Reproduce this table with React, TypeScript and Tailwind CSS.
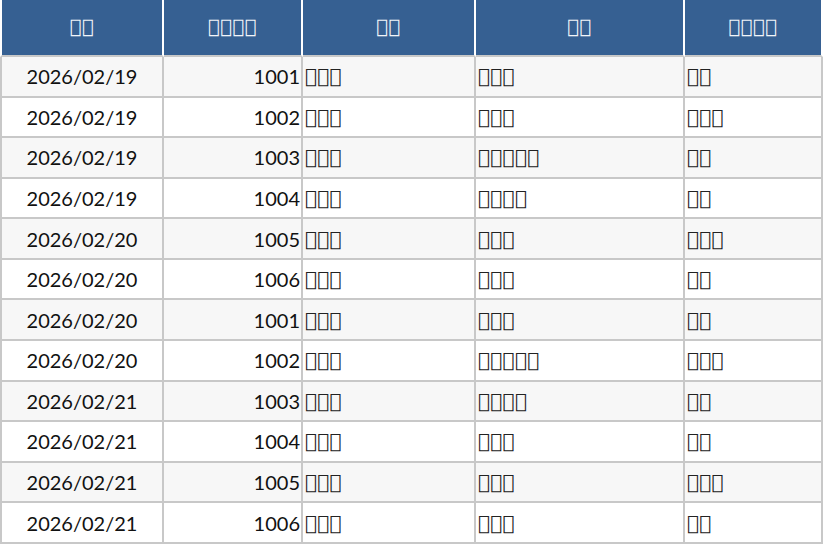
import React from "react";

const T = "\uE000";
const s = (n: number) => Array.from({ length: n }, () => T).join("");

type Row = [string, string, number, number, number];
const rows: Row[] = [
  ["2026/02/19", "1001", 3, 3, 2],
  ["2026/02/19", "1002", 3, 3, 3],
  ["2026/02/19", "1003", 3, 5, 2],
  ["2026/02/19", "1004", 3, 4, 2],
  ["2026/02/20", "1005", 3, 3, 3],
  ["2026/02/20", "1006", 3, 3, 2],
  ["2026/02/20", "1001", 3, 3, 2],
  ["2026/02/20", "1002", 3, 5, 3],
  ["2026/02/21", "1003", 3, 4, 2],
  ["2026/02/21", "1004", 3, 3, 2],
  ["2026/02/21", "1005", 3, 3, 3],
  ["2026/02/21", "1006", 3, 3, 2],
];

const headers = [2, 4, 2, 2, 4];
const boxFont = { fontFamily: "'DejaVu Sans', sans-serif" };

export default function App() {
  return (
    <div className="w-[823px] h-[544px] bg-white" style={{ fontFamily: "Lato, 'Liberation Sans', sans-serif" }}>
      <table className="border-separate border-spacing-0 table-fixed w-[823px] text-[20px]">
        <colgroup>
          <col className="w-[164px]" />
          <col className="w-[139px]" />
          <col className="w-[173px]" />
          <col className="w-[209px]" />
          <col className="w-[138px]" />
        </colgroup>
        <thead>
          <tr>
            {headers.map((n, i) => (
              <th
                key={i}
                className={`h-[57px] p-0 bg-[#366092] text-[#f2f5f9] text-[19.2px] font-normal text-center tracking-[0.7px] border-b-2 border-b-[#c8c8c8] border-r-2 border-r-white ${i === 0 ? "border-l-2 border-l-white" : ""} ${i === 4 ? "border-r-[#c8c8c8]" : ""}`}
                style={boxFont}
              >
                {s(n)}
              </th>
            ))}
          </tr>
        </thead>
        <tbody>
          {rows.map((r, i) => {
            const bg = i % 2 === 0 ? "bg-[#f7f7f7]" : "bg-white";
            const cell = `h-[40.58px] p-0 border-b-2 border-r-2 border-[#c8c8c8] text-[#111] ${bg}`;
            const box = `${cell} text-left pl-[2px] tracking-[0.3px] text-[#222]`;
            return (
              <tr key={i}>
                <td className={`${cell} border-l-2 text-center`}>{r[0]}</td>
                <td className={`${cell} text-right pr-[1px]`}>{r[1]}</td>
                <td className={box} style={boxFont}>{s(r[2])}</td>
                <td className={box} style={boxFont}>{s(r[3])}</td>
                <td className={box} style={boxFont}>{s(r[4])}</td>
              </tr>
            );
          })}
        </tbody>
      </table>
    </div>
  );
}
